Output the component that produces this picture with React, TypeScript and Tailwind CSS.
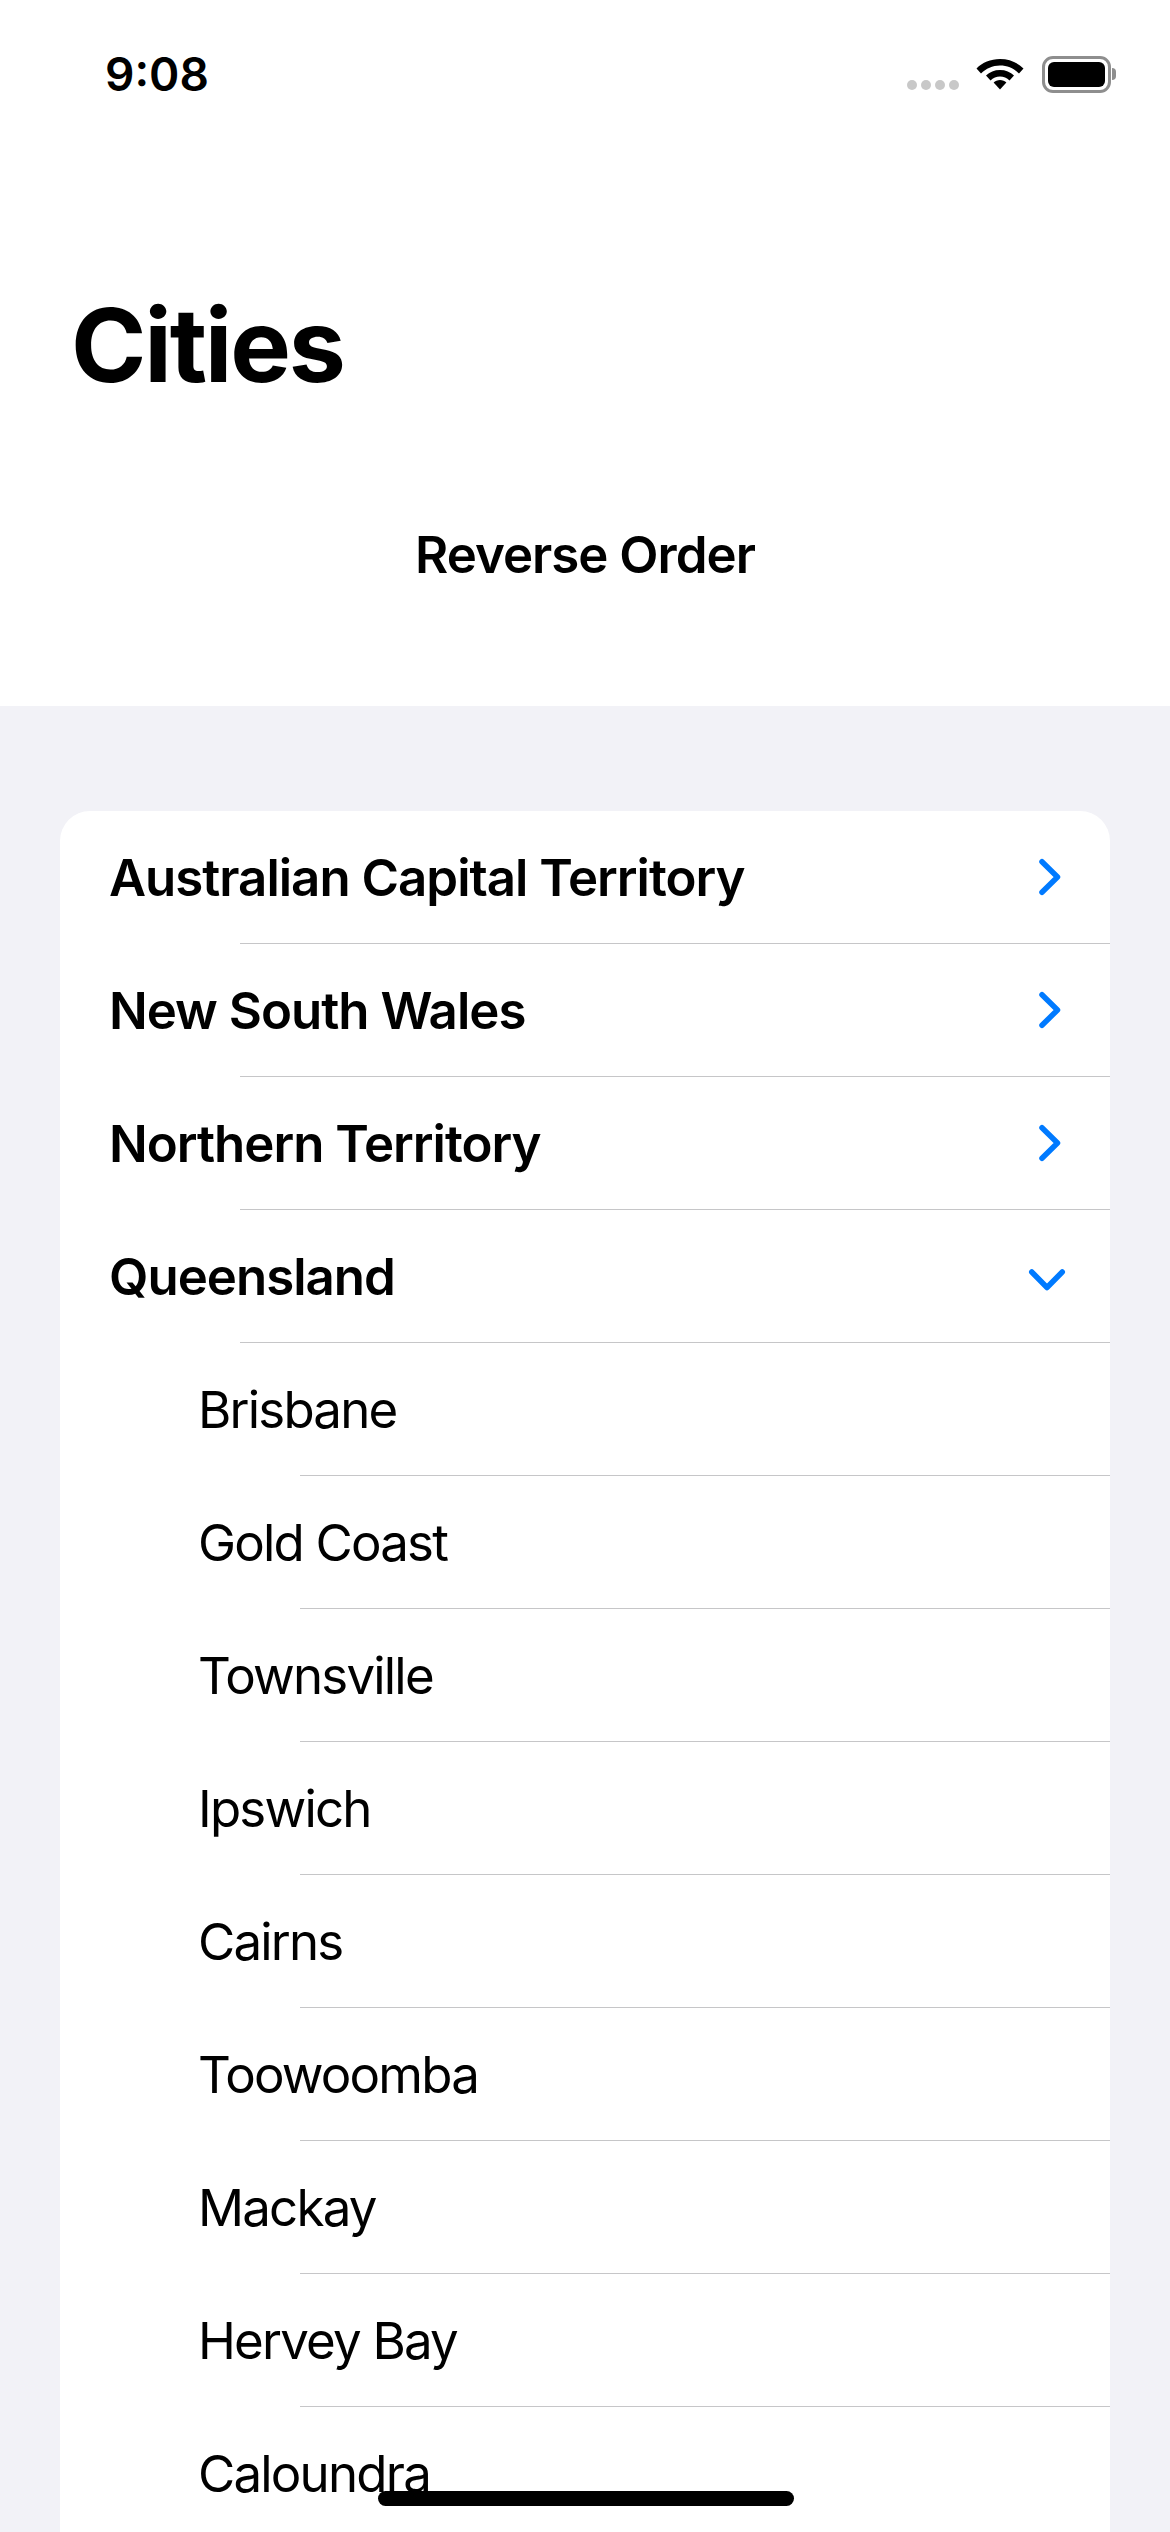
const font = { fontFamily: 'Inter, "Liberation Sans", sans-serif' };

function Chevron({ down }: { down?: boolean }) {
  return down ? (
    <svg width="40" height="24" viewBox="0 0 40 24" fill="none" className="mt-[10px]">
      <path d="M4.75 3 L20 18.5 L35.25 3" stroke="#007aff" strokeWidth="5.5" strokeLinecap="round" strokeLinejoin="round" />
    </svg>
  ) : (
    <svg width="24" height="40" viewBox="0 0 24 40" fill="none" className="mr-[5px]">
      <path d="M4 4.75 L19.5 20 L4 35.25" stroke="#007aff" strokeWidth="5.5" strokeLinecap="round" strokeLinejoin="round" />
    </svg>
  );
}

function Row({ label, bold, chevron, sep }: { label: string; bold?: boolean; chevron?: 'r' | 'd'; sep?: 'section' | 'city' }) {
  return (
    <div>
      {sep === 'section' && <div className="h-px ml-[180px] bg-[#c6c6c8]" />}
      {sep === 'city' && <div className="h-px ml-[240px] bg-[#c6c6c8]" />}
      <div className={`flex items-center justify-between h-[132px] pr-[43px] ${bold ? 'pl-[49px]' : 'pl-[138px]'}`}>
        <span className={`text-[51px] leading-none text-black whitespace-nowrap ${bold ? 'font-semibold tracking-[-1px]' : 'font-normal tracking-[-1.8px]'}`}>{label}</span>
        {chevron === 'r' && <Chevron />}
        {chevron === 'd' && <Chevron down />}
      </div>
    </div>
  );
}

export default function App() {
  const cities = ['Brisbane', 'Gold Coast', 'Townsville', 'Ipswich', 'Cairns', 'Toowoomba', 'Mackay', 'Hervey Bay', 'Caloundra'];
  return (
    <div style={font} className="relative w-[1170px] h-[2532px] overflow-hidden bg-[#f2f2f7]">
      <div className="bg-white h-[706px] flex flex-col">
        <div className="flex items-center justify-between h-[148px] pl-[105px] pr-[54px]">
          <span className="text-[46px] font-semibold text-black leading-none">9:08</span>
          <div className="flex items-center">
            <div className="flex gap-[4px] mt-[22px] mr-[15px]">
              {[0, 1, 2, 3].map((i) => (
                <div key={i} className="w-[10px] h-[10px] rounded-full bg-[#c8c8c8]" />
              ))}
            </div>
            <svg width="52" height="36" viewBox="0 0 50 36" className="mr-[16px]">
              <path d="M25 3C15.5 3 7.5 6.5 1.5 12.5L6 17.5C11 12.5 17.5 9.5 25 9.5C32.5 9.5 39 12.5 44 17.5L48.5 12.5C42.5 6.5 34.5 3 25 3Z" fill="#000" />
              <path d="M25 14C19.5 14 14.5 16 11 19.5L15.5 24.5C18 22 21.5 20.5 25 20.5C28.5 20.5 32 22 34.5 24.5L39 19.5C35.5 16 30.5 14 25 14Z" fill="#000" />
              <path d="M25 24C22.5 24 20.2 25 18.6 26.5L25 33.5L31.4 26.5C29.8 25 27.5 24 25 24Z" fill="#000" />
            </svg>
            <div className="flex items-center">
              <div className="w-[69px] h-[37px] rounded-[11px] border-[3px] border-[#8e8e8e] p-[3px]">
                <div className="w-full h-full rounded-[6px] bg-black" />
              </div>
              <div className="w-[4px] h-[12px] rounded-r-full bg-[#8e8e8e] ml-[1px]" />
            </div>
          </div>
        </div>
        <div className="pl-[71px] mt-[146px] text-[102px] font-bold leading-none tracking-[-2.2px] text-black">Cities</div>
        <div className="mt-[133px] text-center text-[51px] font-semibold leading-none tracking-[-1px] text-black">Reverse Order</div>
      </div>
      <div className="mt-[105px] mx-[60px] bg-white rounded-t-[30px]">
        <Row bold label="Australian Capital Territory" chevron="r" />
        <Row bold sep="section" label="New South Wales" chevron="r" />
        <Row bold sep="section" label="Northern Territory" chevron="r" />
        <Row bold sep="section" label="Queensland" chevron="d" />
        {cities.map((c, i) => (
          <Row key={c} label={c} sep={i === 0 ? 'section' : 'city'} />
        ))}
      </div>
      <div className="absolute left-[378px] top-[2491px] w-[416px] h-[15px] rounded-full bg-black" />
    </div>
  );
}
